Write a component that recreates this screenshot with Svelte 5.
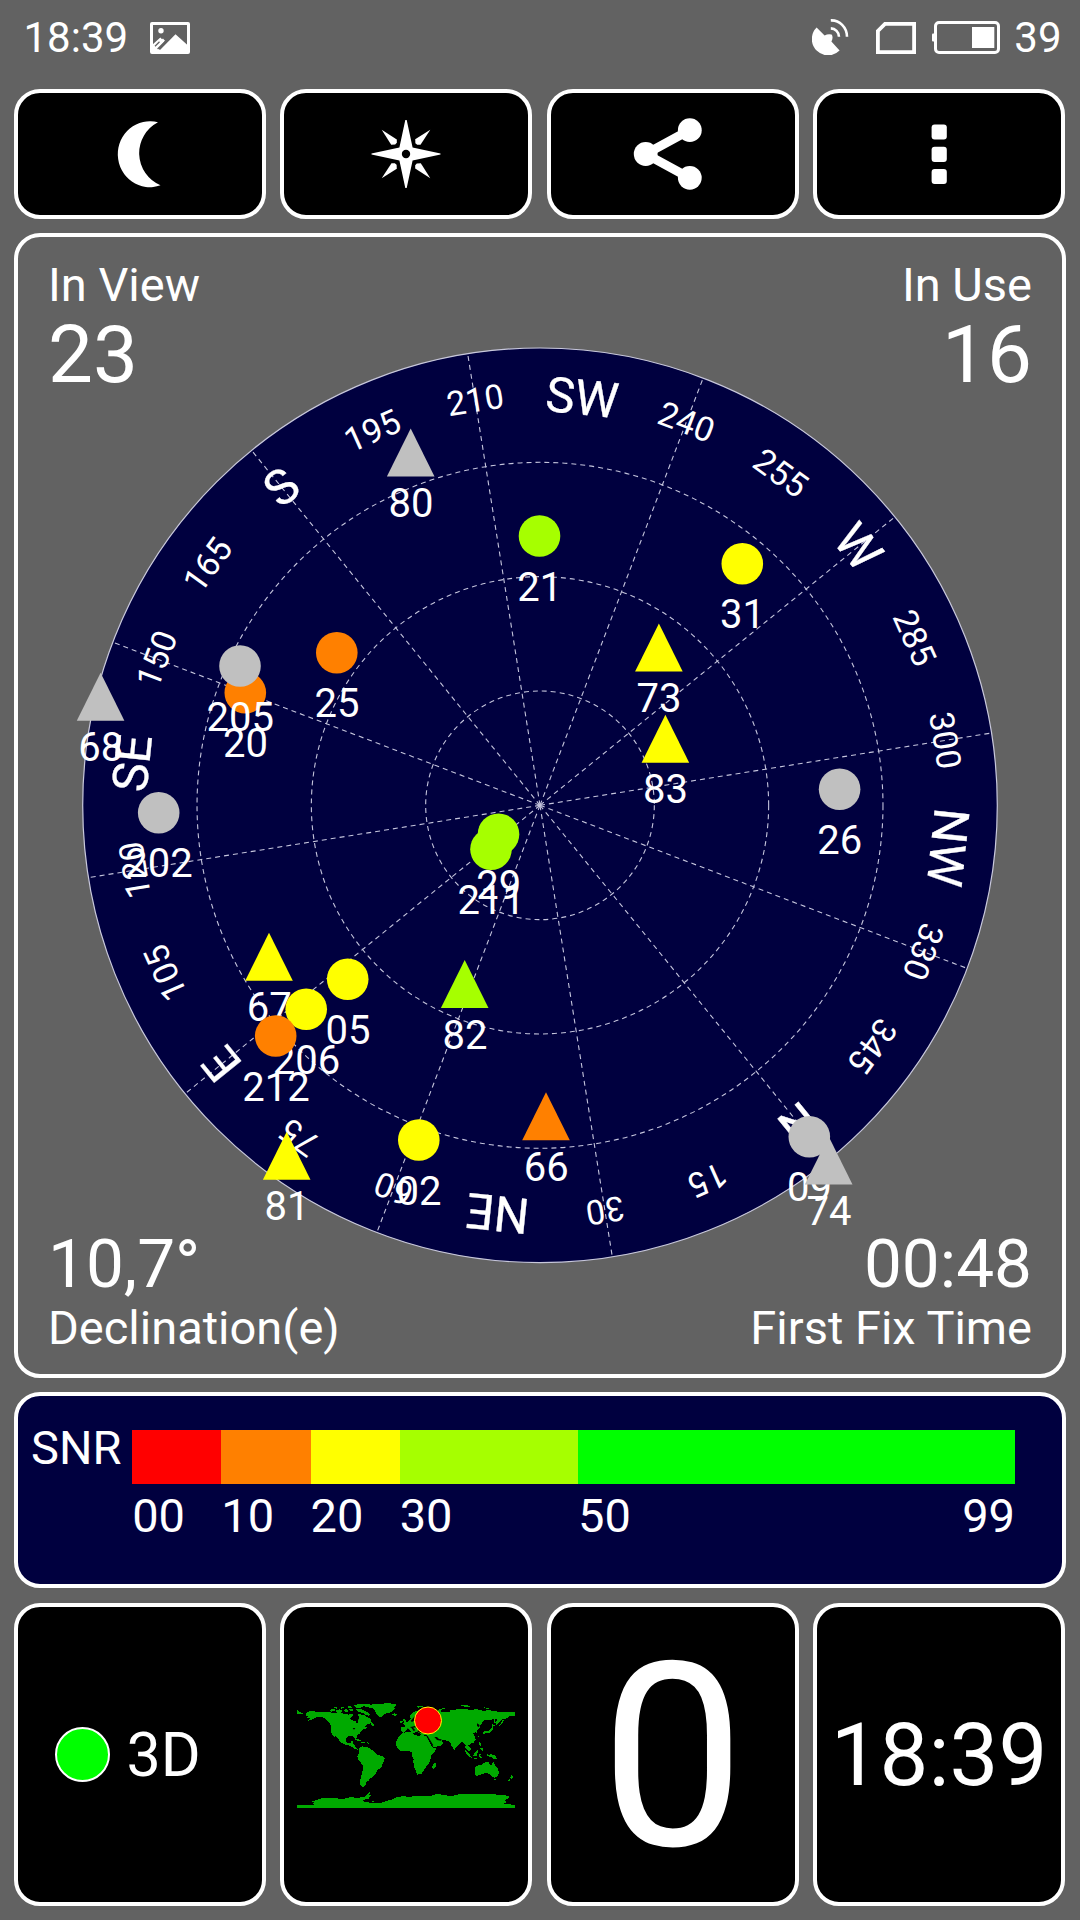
<script lang="ts">
	type Shape = 'circle' | 'triangle';

	interface Satellite {
		id: string;
		x: number;
		y: number;
		shape: Shape;
		color: string;
	}

	interface Label {
		bearing: number;
		text: string;
		cardinal: boolean;
	}

	const GREY = '#c0c0c0';
	const RED = '#ff0000';
	const ORANGE = '#ff8000';
	const YELLOW = '#ffff00';
	const LIME = '#a6ff00';
	const GREEN = '#00ff00';

	const radius = 457.3;
	const heading = 219.1;
	const cardinals = ['N', 'NE', 'E', 'SE', 'S', 'SW', 'W', 'NW'];

	const labels: Label[] = Array.from({ length: 24 }, (_, i) => {
		const bearing = i * 15;
		const cardinal = bearing % 45 === 0;
		return { bearing, cardinal, text: cardinal ? cardinals[bearing / 45] : String(bearing) };
	});
	const spokes = Array.from({ length: 12 }, (_, i) => i * 30);
	const rings = [1 / 4, 2 / 4, 3 / 4].map((part) => part * radius);

	// positions are offsets from the zenith, drawn in this order
	const satellites: Satellite[] = [
		{ id: '80', x: -129.3, y: -352.8, shape: 'triangle', color: GREY },
		{ id: '21', x: -0.5, y: -269.3, shape: 'circle', color: LIME },
		{ id: '31', x: 202.3, y: -241.6, shape: 'circle', color: YELLOW },
		{ id: '73', x: 118.9, y: -157.8, shape: 'triangle', color: YELLOW },
		{ id: '83', x: 125.4, y: -66.6, shape: 'triangle', color: YELLOW },
		{ id: '25', x: -203.2, y: -152.6, shape: 'circle', color: ORANGE },
		{ id: '20', x: -294.7, y: -112.6, shape: 'circle', color: ORANGE },
		{ id: '205', x: -300, y: -139.3, shape: 'circle', color: GREY },
		{ id: '68', x: -439.4, y: -108.6, shape: 'triangle', color: GREY },
		{ id: '202', x: -381.3, y: 7.4, shape: 'circle', color: GREY },
		{ id: '26', x: 299.6, y: -16, shape: 'circle', color: GREY },
		{ id: '29', x: -41.5, y: 29, shape: 'circle', color: LIME },
		{ id: '211', x: -49, y: 44, shape: 'circle', color: LIME },
		{ id: '67', x: -271, y: 151.4, shape: 'triangle', color: YELLOW },
		{ id: '05', x: -192.3, y: 174, shape: 'circle', color: YELLOW },
		{ id: '206', x: -233.8, y: 204, shape: 'circle', color: YELLOW },
		{ id: '212', x: -264.3, y: 230.7, shape: 'circle', color: ORANGE },
		{ id: '82', x: -75.3, y: 178.7, shape: 'triangle', color: LIME },
		{ id: '66', x: 6, y: 310.9, shape: 'triangle', color: ORANGE },
		{ id: '02', x: -121.2, y: 334.7, shape: 'circle', color: YELLOW },
		{ id: '81', x: -253.3, y: 350.5, shape: 'triangle', color: YELLOW },
		{ id: '09', x: 269.3, y: 331.4, shape: 'circle', color: GREY },
		{ id: '74', x: 288.7, y: 355.3, shape: 'triangle', color: GREY }
	];

	const snr = [
		{ from: '00', span: 10, color: RED },
		{ from: '10', span: 10, color: ORANGE },
		{ from: '20', span: 10, color: YELLOW },
		{ from: '30', span: 20, color: LIME },
		{ from: '50', to: '99', span: 49, color: GREEN }
	];

	let inView = $state(satellites.length);
	let inUse = $state(16);
	let declination = $state('10,7°');
	let firstFix = $state('00:48');
	let clock = $state('18:39');
	let battery = $state(39);
	let speed = $state(0);
</script>

<div class="screen">
	<header class="status">
		<span class="status-text">{clock}</span>
		<svg class="picture" width="40" height="32" viewBox="0 0 40 32">
			<rect x="1.5" y="1.5" width="37" height="29" rx="0.5" fill="none" stroke="#fff" stroke-width="3" />
			<circle cx="11" cy="8.7" r="2.7" fill="#fff" />
			<path d="M2 23 10.3 15.6 12 17.2 13 16.4 15 18.8 8.2 26.6 10 28 25.5 12.3 38 23.4V31H2Z" fill="#fff" />
			<path d="M17.2 17.6 7.6 27M9.5 19.8 5 24.3" stroke="#626262" stroke-width="1.3" />
		</svg>
		<div class="status-right">
			<svg class="dish" width="37" height="36" viewBox="0 0 37 36">
				<path d="M4.6 8.6 12.6 16.6Q16 14.6 19.6 15.6 21.6 18 19.4 22.6L27.6 31.6A15.4 15.4 0 1 1 4.6 8.6Z" fill="#fff" />
				<path d="M18.8 1.4A15.5 16.5 0 0 1 35 17.7M18.8 9.4A8.5 8.5 0 0 1 27 17.7" fill="none" stroke="#fff" stroke-width="2.6" />
			</svg>
			<svg class="sim" width="40" height="32" viewBox="0 0 40 32">
				<path d="M9 1.9H38.1V30.1H1.9V9Z" fill="none" stroke="#fff" stroke-width="3.8" />
			</svg>
			<svg class="battery" width="68" height="33" viewBox="0 0 68 33">
				<rect x="0" y="12.5" width="3" height="8" rx="1" fill="#fff" />
				<rect x="3.5" y="1.5" width="63" height="30" rx="3.5" fill="none" stroke="#fff" stroke-width="3" />
				<rect x="40" y="6" width="22.3" height="21" fill="#fff" />
			</svg>
			<span class="status-text">{battery}</span>
		</div>
	</header>

	<nav class="tiles toolbar">
		<button class="tile" aria-label="Night mode">
			<svg width="80" height="80" viewBox="-40 -40 80 80">
				<path d="M18 -31.7A32 33 0 1 0 20.5 31.3 34.8 34.8 0 0 1 18 -31.7Z" fill="#fff" />
			</svg>
		</button>
		<button class="tile" aria-label="Compass">
			<svg width="80" height="80" viewBox="-40 -40 80 80">
				<path d="M-.7 -34H.7L6.6 -6.5 34.5 -.6V.6L6.6 6.5 .7 34H-.7L-6.6 6.5-34.5 .6V-.6L-6.6 -6.5Z" fill="#fff" />
				{#each [0, 90, 180, 270] as turn}
					<path d="M-24.3 -24.3-9.2 -14.5-9.2 -11.2-10.8 -9.4-14.8 -9.2Z" fill="#fff" transform="rotate({turn})" />
				{/each}
				<circle r="4.2" />
			</svg>
		</button>
		<button class="tile" aria-label="Share">
			<svg width="80" height="80" viewBox="-40 -40 80 80">
				<path d="M16.8 -24-27.3 0 16.8 24" fill="none" stroke="#fff" stroke-width="9" />
				<circle cx="-27.3" cy="0" r="11.9" fill="#fff" />
				<circle cx="16.8" cy="-23.8" r="11.9" fill="#fff" />
				<circle cx="16.8" cy="23.8" r="11.9" fill="#fff" />
			</svg>
		</button>
		<button class="tile" aria-label="More">
			<svg width="80" height="80" viewBox="-40 -40 80 80">
				{#each [-29.6, -7.2, 14.9] as y}
					<rect x="-7.4" {y} width="15.2" height="15.2" rx="3" fill="#fff" />
				{/each}
			</svg>
		</button>
	</nav>

	<section class="sky">
		<svg class="chart" viewBox="-522 -568.3 1044 1137">
			<circle r={radius} class="dial" />
			{#each rings as r}
				<circle {r} class="grid" />
			{/each}
			{#each spokes as bearing}
				<line y2={-radius} class="grid" transform="rotate({bearing - heading})" />
			{/each}
			{#each labels as label (label.bearing)}
				<text
					class={label.cardinal ? 'cardinal' : 'degree'}
					y={label.cardinal ? -393 : -398.5}
					transform="rotate({label.bearing - heading})">{label.text}</text>
			{/each}
			{#each satellites as sat (sat.id)}
				<g transform="translate({sat.x} {sat.y})">
					{#if sat.shape === 'circle'}
						<circle r="20.8" fill={sat.color} />
					{:else}
						<path d="M0 -24 23.8 24H-23.8Z" fill={sat.color} />
					{/if}
					<text class="sat" x="0.2" y="64.5">{sat.id}</text>
				</g>
			{/each}
		</svg>
		<div class="readouts">
			<div>
				<div class="caption">In View</div>
				<div class="count">{inView}</div>
			</div>
			<div class="end">
				<div class="caption">In Use</div>
				<div class="count">{inUse}</div>
			</div>
		</div>
		<div class="readouts">
			<div>
				<div class="value">{declination}</div>
				<div class="caption">Declination(e)</div>
			</div>
			<div class="end">
				<div class="value">{firstFix}</div>
				<div class="caption">First Fix Time</div>
			</div>
		</div>
	</section>

	<section class="snr">
		<div class="snr-title">SNR</div>
		<div class="scale">
			{#each snr as band}
				<div class="band" style="flex-grow: {band.span}">
					<div class="bar" style="background: {band.color}"></div>
					<div class="ticks">
						<span>{band.from}</span>
						{#if band.to}<span>{band.to}</span>{/if}
					</div>
				</div>
			{/each}
		</div>
	</section>

	<section class="tiles bottom">
		<div class="tile fix">
			<span class="led"></span>
			<span class="fix-text">3D</span>
		</div>
		<div class="tile">
			<svg class="map" width="218" height="105" viewBox="21 25 654 315">
				<g fill="#00aa00" shape-rendering="crispEdges">
					<!-- North America -->
					<path d="M21 46 27 50 30 53 39 56 39 59 21 59Z" />
					<path d="M48 57 54 51 64 48 76 51 94 53 112 51 126 54 150 56 165 57 177 60 183 56 189 60 186 66 180 72 183 77 195 78 199 84 204 84 204 76 208 68 203 63 206 57 214 60 222 60 228 66 236 69 243 75 245 83 240 87 232 88 225 96 233 97 228 102 219 105 211 111 209 117 201 122 200 130 196 134 191 126 183 123 174 126 169 132 169 141 174 146 183 146 184 140 190 138 190 148 195 154 199 161 207 163 205 165 196 164 188 158 180 153 167 151 156 145 148 138 142 128 134 121 135 130 126 118 122 106 122 93 118 84 110 76 102 69 92 66 80 67 72 72 64 76 52 79 60 72 51 69 54 64 48 63Z" />
					<path d="M193 134 203 133 213 138 207 140 198 136ZM214 141 226 142 222 145 214 144ZM230 143 236 144 236 147 230 146ZM244 83 252 89 250 95 242 89Z" />
					<!-- Arctic islands -->
					<path d="M120 47 128 42 137 43 133 49 122 51ZM138 46 150 44 158 49 154 54 140 54ZM126 40 138 37 146 40 140 42ZM150 39 160 36 164 40 154 42ZM162 46 170 43 174 50 167 54ZM170 36 182 34 188 39 176 41ZM178 44 188 43 190 50 181 50ZM190 32 205 29 228 28 244 28 234 33 219 35 210 40 198 41 195 36ZM196 44 210 43 222 47 232 52 240 59 235 63 226 61 219 55 206 51Z" />
					<!-- Greenland and Iceland -->
					<path d="M225 36 240 30 262 28 290 26 312 27 322 31 313 36 314 42 308 49 298 54 285 57 278 63 273 69 266 66 260 58 255 48 249 41 236 38ZM304 58 314 56 322 59 316 63 307 62Z" />
					<!-- South America -->
					<path d="M207 161 217 155 229 157 239 160 247 167 254 174 262 181 276 184 284 191 281 201 276 209 274 218 263 226 257 236 250 245 241 251 236 258 229 263 228 271 220 274 226 278 217 277 211 271 211 254 215 240 219 225 220 213 213 205 205 195 202 185 207 176Z" />
					<!-- Europe and Asia -->
					<path d="M334 110 333 98 345 97 344 91 340 88 351 84 358 78 362 72 360 62 370 53 384 47 397 44 405 50 420 48 428 52 440 52 447 45 462 39 471 40 456 45 452 51 468 51 480 51 480 46 494 47 500 44 520 42 543 46 558 43 578 48 600 47 615 50 637 52 660 53 675 52 675 65 659 64 651 71 639 73 630 80 620 92 616 83 622 74 611 72 602 76 583 76 577 84 572 91 568 102 561 108 563 119 556 113 549 116 554 124 557 134 552 143 541 148 535 152 545 164 538 171 529 163 526 158 527 151 519 143 512 143 505 151 497 159 493 167 485 154 481 142 472 138 455 136 455 141 461 144 451 153 431 158 423 147 413 130 415 123 402 121 390 119 388 114 377 113 369 116 361 108 354 102 347 108 340 114Z" />
					<path d="M339 89 352 86 347 76 343 71 338 76 343 82ZM330 86 338 83 337 77 330 79ZM378 36 394 33 399 36 386 39ZM512 32 527 30 542 36 528 37ZM581 38 602 40 594 43 584 41Z" />
					<!-- Africa and Madagascar -->
					<path d="M327 125 337 115 356 112 367 111 370 119 386 124 397 121 411 125 417 139 423 151 429 160 440 159 434 172 423 184 421 195 417 207 407 218 400 229 394 238 382 240 378 230 372 215 370 202 371 193 366 183 365 173 354 168 341 170 329 168 320 157 318 144 321 134ZM435 203 439 208 436 219 431 224 426 220 429 210Z" />
					<!-- Australia, islands and New Zealand -->
					<path d="M554 219 565 212 573 211 580 205 588 202 597 202 597 209 606 212 609 200 615 212 624 222 627 233 624 243 614 249 606 246 600 239 592 235 580 237 569 242 557 243 555 232ZM611 254 618 253 615 259ZM664 242 670 247 664 253 661 249ZM660 253 662 257 654 261 651 260ZM588 177 596 180 606 179 617 184 621 194 611 192 602 187 594 185ZM551 178 560 169 565 165 563 174 559 184 550 184ZM568 178 575 177 571 182 575 189 570 190 567 184ZM523 163 533 172 543 185 541 188 530 178ZM543 188 557 190 564 193 554 193ZM568 143 572 145 573 155 568 152ZM571 161 580 161 579 169 573 166ZM563 122 567 123 565 129Z" />
					<path d="M577 115 583 109 594 109 603 103 606 95 609 96 607 109 598 114 586 115 581 120ZM606 89 616 91 611 95 605 95ZM611 72 614 73 616 83 613 86ZM639 75 642 77 635 89 628 93 633 85Z" />
					<!-- Antarctica -->
					<path d="M21 330 74 330 65 325 76 323 66 321 75 317 96 311 125 311 162 312 178 308 204 309 219 308 227 304 233 297 240 292 241 296 236 299 243 303 236 307 238 312 230 313 217 318 224 322 242 324 258 325 275 324 292 318 305 315 319 308 335 305 360 306 390 304 420 304 438 299 465 300 475 304 490 303 510 298 555 297 600 297 627 301 640 300 658 306 654 313 643 316 649 323 641 326 649 329 675 330 675 339 21 339ZM207 311 221 309 226 313 219 316ZM246 319 253 319 252 323 246 323Z" />
				</g>
				<g fill="#000">
					<!-- Black Sea, Caspian, gulfs and lakes -->
					<path d="M359 97 364 99 371 109 376 107 369 99 377 98 385 106 382 112 391 114 408 118 414 118 414 112 392 108 400 102 388 100 377 93 366 96ZM409 124 413 124 430 152 426 154ZM433 127 441 127 447 133 455 134 453 138 441 136ZM353 101 360 107 357 110 347 111ZM561 86 569 91 567 98 561 94Z" />
					<path d="M193 72 202 68 207 73 199 78ZM188 100 196 100 192 105ZM384 63 376 75 366 82 362 79 374 65Z" />
				</g>
				<circle cx="414" cy="77.5" r="40.5" fill={RED} stroke={YELLOW} stroke-width="3" />
			</svg>
		</div>
		<div class="tile">
			<span class="speed">{speed}</span>
		</div>
		<div class="tile">
			<span class="clock">{clock}</span>
		</div>
	</section>
</div>

<style>
	:global(body) {
		background: #626262;
	}

	.screen {
		box-sizing: border-box;
		display: flex;
		flex-direction: column;
		width: 1080px;
		height: 1920px;
		padding: 0 14.5px 14px 14px;
		background: #626262;
		color: #fff;
		font-family: Roboto, 'Noto Sans', sans-serif;
		overflow: hidden;
	}

	svg {
		display: block;
		flex: none;
	}

	.status {
		display: flex;
		align-items: flex-start;
		height: 89px;
		padding: 0 4px 0 9.5px;
	}

	.status-text {
		margin-top: 13px;
		font-size: 42px;
		line-height: 50px;
	}

	.picture {
		margin: 22px 0 0 22px;
	}

	.status-right {
		display: flex;
		margin-left: auto;
	}

	.dish {
		margin-top: 19px;
	}

	.sim {
		margin: 22px 16px 0 27px;
	}

	.battery {
		margin: 21px 14px 0 0;
	}

	.tiles {
		display: grid;
		grid-template-columns: repeat(4, 252px);
		justify-content: space-between;
		margin-right: 0.5px;
	}

	.tile {
		box-sizing: border-box;
		display: flex;
		align-items: center;
		justify-content: center;
		padding: 0;
		border: 4px solid #fff;
		border-radius: 26px;
		background: #000;
		color: #fff;
		font-family: inherit;
	}

	.toolbar {
		height: 130px;
		margin-bottom: 14px;
	}

	.sky {
		position: relative;
		box-sizing: border-box;
		display: flex;
		flex-direction: column;
		justify-content: space-between;
		height: 1145px;
		margin-bottom: 14px;
		padding: 20px 29.5px 18.5px 30px;
		border: 4px solid #fff;
		border-radius: 26px;
	}

	.chart {
		position: absolute;
		inset: 0;
		width: 1044px;
		height: 1137px;
	}

	.dial {
		fill: #00003f;
		stroke: #c8c8dc;
		stroke-width: 1.2;
	}

	.grid {
		fill: none;
		stroke: #c4c4dc;
		stroke-width: 1.1;
		stroke-dasharray: 5 4;
	}

	.chart text {
		fill: #fff;
		text-anchor: middle;
	}

	.degree {
		font-size: 34px;
	}

	.cardinal {
		font-size: 49px;
		stroke: #fff;
		stroke-width: 0.3;
	}

	.sat {
		font-size: 40px;
	}

	.readouts {
		display: flex;
		justify-content: space-between;
	}

	.end {
		text-align: right;
	}

	.caption {
		font-size: 47px;
		line-height: 56px;
	}

	.count {
		font-size: 80px;
		line-height: 85px;
	}

	.value {
		font-size: 67.5px;
		line-height: 72px;
	}

	.snr {
		box-sizing: border-box;
		display: flex;
		height: 196px;
		margin-bottom: 15px;
		padding: 33.5px 46.5px 0 13px;
		border: 4px solid #fff;
		border-radius: 26px;
		background: #00003f;
		font-size: 47px;
		line-height: 56px;
	}

	.snr-title {
		width: 101.2px;
		margin-top: -9.5px;
	}

	.scale {
		display: flex;
		flex: 1;
	}

	.band {
		flex-basis: 0;
		min-width: 0;
	}

	.bar {
		height: 54.5px;
	}

	.ticks {
		display: flex;
		justify-content: space-between;
		margin-top: 4px;
	}

	.bottom {
		height: 303px;
	}

	.fix {
		justify-content: flex-start;
		padding-left: 36.5px;
	}

	.led {
		box-sizing: border-box;
		width: 55px;
		height: 55px;
		border: 2px solid #fff;
		border-radius: 50%;
		background: #00ff00;
	}

	.fix-text {
		margin-left: 17px;
		font-size: 61px;
		line-height: 70px;
	}

	.map {
		margin-top: 2px;
	}

	.speed {
		margin-top: 7px;
		font-size: 257px;
		line-height: 280px;
	}

	.clock {
		font-size: 87px;
		line-height: 100px;
	}
</style>
